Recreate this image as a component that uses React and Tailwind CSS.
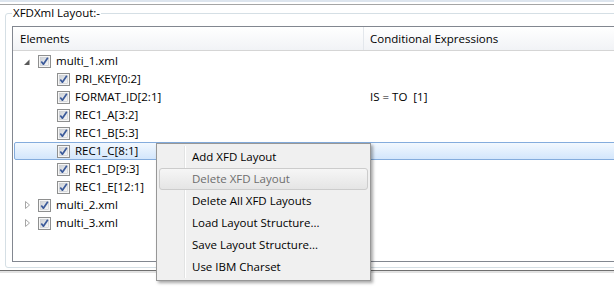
import React from "react";

const rows = [
  { label: "multi_1.xml", level: 0, arrow: "open" },
  { label: "PRI_KEY[0:2]", level: 1 },
  { label: "FORMAT_ID[2:1]", level: 1, cond: "IS = TO  [1]" },
  { label: "REC1_A[3:2]", level: 1 },
  { label: "REC1_B[5:3]", level: 1 },
  { label: "REC1_C[8:1]", level: 1, selected: true },
  { label: "REC1_D[9:3]", level: 1 },
  { label: "REC1_E[12:1]", level: 1 },
  { label: "multi_2.xml", level: 0, arrow: "closed" },
  { label: "multi_3.xml", level: 0, arrow: "closed" },
];

const menuItems = [
  { label: "Add XFD Layout" },
  { label: "Delete XFD Layout", disabled: true, hover: true },
  { label: "Delete All XFD Layouts" },
  { label: "Load Layout Structure..." },
  { label: "Save Layout Structure..." },
  { label: "Use IBM Charset" },
];

const CheckBox = () => (
  <svg width="13" height="13" viewBox="0 0 13 13" className="shrink-0">
    <defs>
      <linearGradient id="cbFill" x1="0" y1="0" x2="1" y2="1">
        <stop offset="0" stopColor="#cdd1d6" />
        <stop offset="1" stopColor="#f8f8f8" />
      </linearGradient>
    </defs>
    <rect x="0.5" y="0.5" width="12" height="12" fill="#f6f6f6" stroke="#8e8f8f" />
    <rect x="2.5" y="2.5" width="8" height="8" fill="url(#cbFill)" stroke="#c4c7cc" strokeWidth="0.6" />
    <path d="M3.3 6.4 L5.4 9.2 L9.8 2.8" fill="none" stroke="#3b5a9a" strokeWidth="1.7" strokeLinejoin="round" />
  </svg>
);

const Arrow = ({ type }) => (
  <svg width="18" height="18" viewBox="0 0 18 18" className="shrink-0">
    {type === "open" && <path d="M9.5 7.5 L9.5 13 L4 13 Z" fill="#595959" />}
    {type === "closed" && (
      <path d="M5.5 5.5 L5.5 12.5 L9.5 9 Z" fill="#ffffff" stroke="#a6a6a6" strokeLinejoin="round" />
    )}
  </svg>
);

const App = () => {
  return (
    <div
      className="relative w-[614px] h-[293px] overflow-hidden bg-white text-black text-[11.5px]"
      style={{ fontFamily: '"Open Sans", "Noto Sans", sans-serif' }}
    >
      <div className="h-[2px] bg-[#dde5ee]" />
      <div className="h-[2px]" />
      <div className="h-[1px] bg-[#a5a5a5]" />

      <fieldset className="ml-[5px] w-[700px] h-[263px] m-0 px-[6px] pb-[5px] min-w-0 border border-[#d5dfe5] rounded-[3px]">
        <legend className="px-[1px] leading-[16px]">XFDXml Layout:-</legend>

        <div className="mt-[5px] h-[236px] border border-[#828790] flex flex-col">
          <div className="flex h-[24px] border-b border-[#d5d5d5] bg-gradient-to-b from-[#ffffff] to-[#f1f3f6]">
            <div className="w-[351px] flex items-center pl-[7px] border-r border-[#e3e7ec]">Elements</div>
            <div className="flex items-center pl-[6px]">Conditional Expressions</div>
          </div>

          <div className="pt-[1px] flex flex-col">
            {rows.map((r) => (
              <div
                key={r.label}
                className={
                  r.selected
                    ? "flex h-[18px] items-center -ml-[0px] ml-[1px] rounded-[2px] border border-[#84acdd] bg-gradient-to-b from-[#f2f8fe] to-[#d3e6fc]"
                    : "flex h-[18px] items-center"
                }
              >
                <div
                  className={
                    r.selected
                      ? "w-[350px] shrink-0 flex items-center pl-[5px]"
                      : "w-[351px] shrink-0 flex items-center pl-[7px]"
                  }
                >
                  {r.level === 1 && <div className="w-[19px] shrink-0" />}
                  <Arrow type={r.arrow} />
                  <CheckBox />
                  <span className="ml-[5px] whitespace-pre">{r.label}</span>
                </div>
                {r.cond && <div className="pl-[6px] whitespace-pre">{r.cond}</div>}
              </div>
            ))}
          </div>
        </div>
      </fieldset>

      <div className="mt-[2px] h-[1px] bg-[#6f6f6f]" />
      <div className="h-[2px] bg-[#e2e2e2]" />

      <div className="absolute left-[156px] top-[143px] w-[215px] h-[138px] border border-[#979797] bg-[#f0f0f0] shadow-[2px_2px_3px_rgba(0,0,0,0.35)]">
        <div className="absolute left-[27px] top-[2px] bottom-[2px] w-[1px] bg-[#e2e3e3]" />
        <div className="absolute left-[28px] top-[2px] bottom-[2px] w-[1px] bg-white" />
        <div className="relative flex flex-col p-[2px]">
          {menuItems.map((m) => (
            <div
              key={m.label}
              className={
                m.hover
                  ? "h-[22px] flex items-center pl-[32px] rounded-[3px] border border-[#cccccc] bg-gradient-to-b from-[#f6f6f6] to-[#e5e5e5] text-[#6d6d6d]"
                  : "h-[22px] flex items-center pl-[33px]"
              }
            >
              {m.label}
            </div>
          ))}
        </div>
      </div>
    </div>
  );
};

export default App;
